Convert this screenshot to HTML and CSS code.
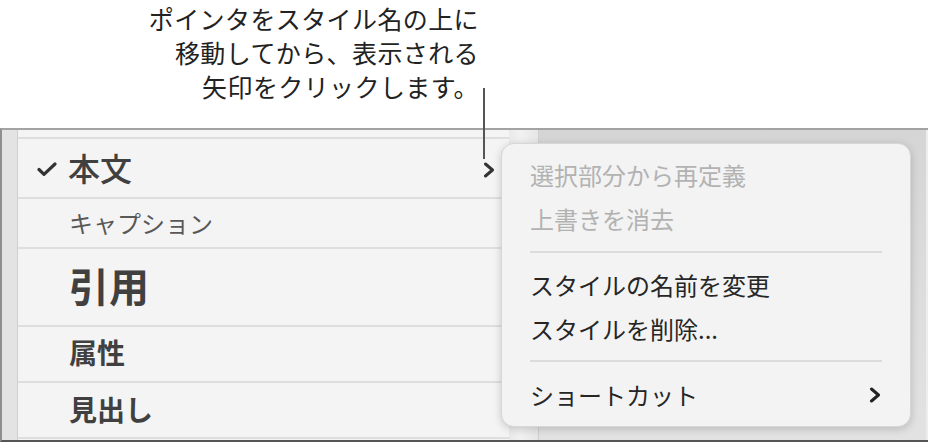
FILE: index.html
```html
<!DOCTYPE html>
<html lang="ja">
<head>
<meta charset="utf-8">
<link rel="stylesheet" href="styles.css">
</head>
<body>
<div class="page">
  <div class="callout">
    <p class="callout-text">ポインタをスタイル名の上に<br>移動してから、表示される<br>矢印をクリックします。</p>
  </div>
  <div class="pointer-line"></div>
  <div class="window">
    <div class="sidebar"></div>
    <div class="list">
      <div class="row row-top"></div>
      <div class="row row-body">
        <svg class="check" width="20" height="14" viewBox="0 0 20 14"><polyline points="2,7.5 7,12.3 18,2" fill="none" stroke="#333" stroke-width="3.2" stroke-linecap="round" stroke-linejoin="round"/></svg>
        <span class="name">本文</span>
        <svg class="row-chevron" width="12" height="16" viewBox="0 0 12 16"><polyline points="2.5,2 9.5,8 2.5,14" fill="none" stroke="#333" stroke-width="3" stroke-linecap="round" stroke-linejoin="round"/></svg>
      </div>
      <div class="row row-caption"><span class="name">キャプション</span></div>
      <div class="row row-quote"><span class="name">引用</span></div>
      <div class="row row-attr"><span class="name">属性</span></div>
      <div class="row row-head"><span class="name">見出し</span></div>
      <div class="row row-bottom"></div>
    </div>
    <div class="gutter"></div>
    <div class="canvas"></div>
  </div>
  <div class="menu">
    <div class="item disabled">選択部分から再定義</div>
    <div class="item disabled">上書きを消去</div>
    <div class="sep"></div>
    <div class="item">スタイルの名前を変更</div>
    <div class="item">スタイルを削除...</div>
    <div class="sep"></div>
    <div class="item has-sub"><span>ショートカット</span>
      <svg width="12" height="16" viewBox="0 0 12 16"><polyline points="2.5,2 9.5,8 2.5,14" fill="none" stroke="#222" stroke-width="3" stroke-linecap="round" stroke-linejoin="round"/></svg>
    </div>
  </div>
</div>
</body>
</html>
```

FILE: styles.css
```css
* { box-sizing: border-box; }
html, body { margin: 0; padding: 0; background: #fff; }
body {
  font-family: "Noto Sans CJK JP", "Noto Sans", sans-serif;
  width: 928px;
  height: 442px;
  overflow: hidden;
}
.page {
  position: relative;
  width: 928px;
  height: 442px;
  display: flex;
  flex-direction: column;
}
.callout {
  height: 128px;
  display: flex;
}
.callout-text {
  margin: 0;
  padding-top: 1px;
  width: 479px;
  text-align: right;
  font-size: 25px;
  line-height: 34px;
  color: #222;
  letter-spacing: 0.4px;
}
.pointer-line {
  position: absolute;
  left: 483px;
  top: 88px;
  width: 2px;
  height: 71px;
  background: #555;
  z-index: 3;
}
.window {
  flex: 1;
  display: grid;
  grid-template-columns: 16px 491px 30px 1fr;
  border-top: 2px solid #a3a3a3;
  border-left: 2px solid #8f8f8f;
  border-bottom: 2px solid #555;
  min-height: 0;
}
.sidebar {
  background: #e3e3e3;
  border-right: 1px solid #d0d0d0;
}
.list {
  background: #f4f4f4;
  display: flex;
  flex-direction: column;
  color: #404040;
}
.row {
  display: flex;
  align-items: center;
  border-bottom: 2px solid #dedede;
  padding-left: 51px;
  position: relative;
}
.row-top { height: 9px; }
.row-body { height: 60px; padding-left: 19px; }
.row-caption { height: 50px; }
.row-quote { height: 78px; }
.row-attr { height: 56px; }
.row-head { height: 56px; }
.row-bottom { flex: 1; border-bottom: none; }
.check { margin-right: 11px; margin-top: 2px; }
.row-body .name { font-size: 32px; font-weight: 500; margin-top: -3px; }
.row-chevron { margin-left: auto; margin-right: 14px; margin-top: 4px; }
.row-caption .name { font-size: 24px; color: #585858; margin-top: -2px; }
.row-quote .name { font-size: 40px; font-weight: 700; margin-top: -4px; }
.row-attr .name { font-size: 28px; font-weight: 700; margin-top: -4px; }
.row-head .name { font-size: 28px; font-weight: 700; margin-top: -2px; }
.gutter {
  background: linear-gradient(to right, #e9e9e9, #f1f1f1 40%, #e6e6e6);
  border-right: 1px solid #cfcfcf;
}
.canvas {
  background: linear-gradient(to bottom, #d5d5d5, #dedede 60%, #e2e2e2);
  border-right: 2px solid #ededed;
}
.menu {
  position: absolute;
  left: 501px;
  top: 143px;
  width: 410px;
  height: 284px;
  background: #f3f3f3;
  border-radius: 13px;
  border: 1px solid #d7d7d7;
  box-shadow: 0 2px 8px rgba(0,0,0,0.18);
  padding: 9px 0 10px;
  display: flex;
  flex-direction: column;
  z-index: 2;
}
.item {
  height: 44px;
  padding: 0 29px 0 28px;
  display: flex;
  align-items: center;
  font-size: 24px;
  color: #262626;
}
.item.disabled { color: #b2b2b2; }
.sep {
  height: 22px;
  margin: 0 28px 0 28px;
  display: flex;
  align-items: center;
}
.sep::before {
  content: "";
  display: block;
  width: 100%;
  height: 2px;
  background: #dcdcdc;
}
.has-sub { justify-content: space-between; }
.has-sub svg { margin-top: 2px; }
```
